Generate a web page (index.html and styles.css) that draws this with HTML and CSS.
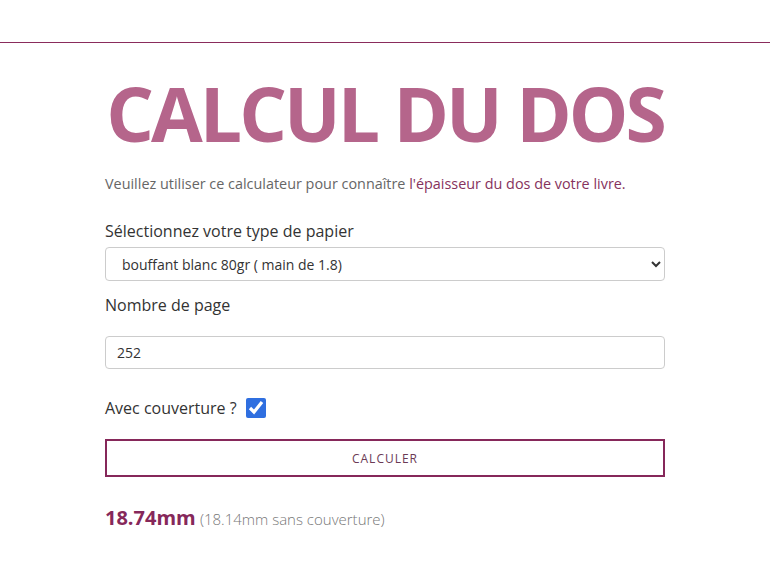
FILE: index.html
```html
<!DOCTYPE html>
<html lang="fr">

<head>
    <meta charset="UTF-8">
    <meta name="viewport" content="width=device-width, initial-scale=1.0">
    <title>Calcul du dos</title>
    <link rel="stylesheet" href="styles.css">
</head>

<body>
    <div class="top-bar"></div>
    <div class="spine-container">
        <h1 class="spine-title">CALCUL DU DOS</h1>
        <p class="spine-intro">Veuillez utiliser ce calculateur pour connaître <span class="accent">l'épaisseur du dos de votre livre.</span></p>
        <form class="spine-form">
            <label for="paper" class="field-label">Sélectionnez votre type de papier</label>
            <select id="paper" class="field-select">
                <option>bouffant blanc 80gr ( main de 1.8)</option>
            </select>

            <label for="pages" class="field-label pages-label">Nombre de page</label>
            <input type="number" id="pages" class="field-input" value="252">

            <div class="cover-row">
                <label for="cover" class="field-label">Avec couverture ?</label>
                <input type="checkbox" id="cover" class="cover-check" checked>
            </div>

            <button type="button" class="calc-button">CALCULER</button>
        </form>
        <div class="spine-result"><strong>18.74mm</strong> <span>(18.14mm sans couverture)</span></div>
    </div>
</body>

</html>
```

FILE: styles.css
```css
* {
    margin: 0;
    padding: 0;
    box-sizing: border-box;
}

body {
    font-family: "Open Sans", Arial, sans-serif;
    background-color: #FFFFFF;
    color: #333;
}

.top-bar {
    height: 43px;
    border-bottom: 1px solid #8a2c5c;
}

.spine-container {
    width: 560px;
    margin: 0 auto;
    padding-top: 25px;
}

.spine-title {
    font-size: 75px;
    font-weight: 700;
    color: #b5658b;
    text-align: center;
    line-height: 90px;
    letter-spacing: -3px;
    white-space: nowrap;
}

.spine-intro {
    margin-top: 16px;
    font-size: 14.4px;
    color: #666;
    line-height: 20px;
}

.spine-intro .accent {
    color: #86325d;
}

.spine-form {
    margin-top: 25px;
    display: flex;
    flex-direction: column;
}

.field-label {
    font-size: 16px;
    color: #333;
    line-height: 24px;
}

.field-select {
    margin-top: 4px;
    height: 34px;
    padding: 0 12px 0 12px;
    font-family: "Open Sans", Arial, sans-serif;
    font-size: 14px;
    color: #333;
    border: 1px solid #ccc;
    border-radius: 4px;
    background-color: #FFFFFF;
}

.pages-label {
    margin-top: 12px;
}

.field-input {
    margin-top: 19px;
    height: 33px;
    padding: 0 11px;
    font-family: "Open Sans", Arial, sans-serif;
    font-size: 14px;
    color: #333;
    border: 1px solid #ccc;
    border-radius: 4px;
}

.cover-row {
    margin-top: 27px;
    display: flex;
    align-items: center;
    gap: 9px;
}

.cover-check {
    width: 20px;
    height: 20px;
    accent-color: #2f6fe0;
}

.calc-button {
    margin-top: 19px;
    height: 38px;
    border: 2px solid #86285a;
    background-color: #FFFFFF;
    color: #6b3a55;
    font-family: "Open Sans", Arial, sans-serif;
    font-size: 12px;
    letter-spacing: 1px;
    cursor: pointer;
}

.spine-result {
    margin-top: 27px;
}

.spine-result strong {
    font-size: 20px;
    color: #86285a;
}

.spine-result span {
    font-size: 15px;
    font-weight: 300;
    color: #777;
}
```
